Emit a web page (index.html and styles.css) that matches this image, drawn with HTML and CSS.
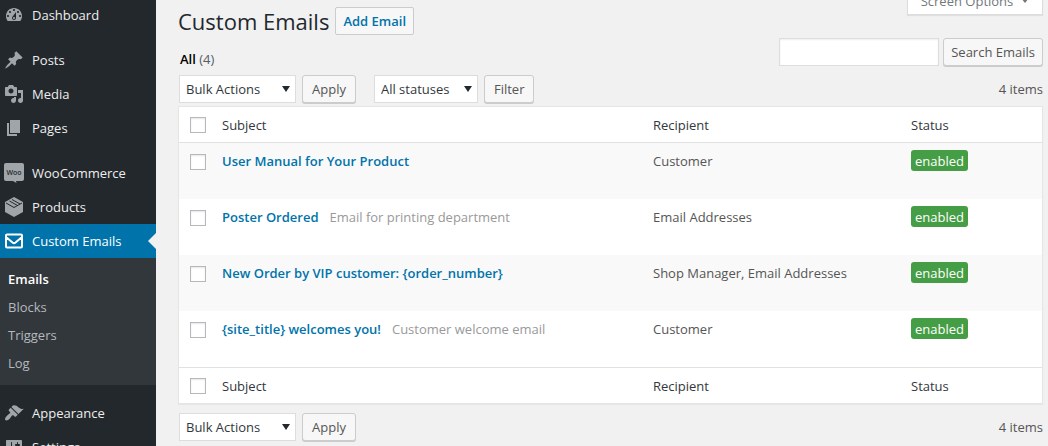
FILE: index.html
```html
<!DOCTYPE html>
<html lang="en">
<head>
<meta charset="utf-8">
<title>Custom Emails</title>
<link rel="stylesheet" href="styles.css">
</head>
<body>
<div class="layout">
  <nav class="sidebar" aria-label="Main menu">
    <ul class="menu">
      <li><a class="menu-link" href="#">
        <svg class="icon" viewBox="0 0 20 20" aria-hidden="true"><path fill-rule="evenodd" d="M3.76 16h12.48c1.1-1.37 1.76-3.11 1.76-5 0-4.42-3.58-8-8-8s-8 3.58-8 8c0 1.89.66 3.63 1.76 5zM10 4c.55 0 1 .45 1 1s-.45 1-1 1-1-.45-1-1 .45-1 1-1zM6 6c.55 0 1 .45 1 1s-.45 1-1 1-1-.45-1-1 .45-1 1-1zm8 0c.55 0 1 .45 1 1s-.45 1-1 1-1-.45-1-1 .45-1 1-1zm-5.37 5.55L12 7v6c0 1.1-.9 2-2 2s-2-.9-2-2c0-.57.24-1.08.63-1.45zM4 10c.55 0 1 .45 1 1s-.45 1-1 1-1-.45-1-1 .45-1 1-1zm12 0c.55 0 1 .45 1 1s-.45 1-1 1-1-.45-1-1 .45-1 1-1zm-5 3c0-.55-.45-1-1-1s-1 .45-1 1 .45 1 1 1 1-.45 1-1z"/></svg>
        Dashboard</a></li>
      <li class="group-start"><a class="menu-link" href="#">
        <svg class="icon" viewBox="0 0 20 20" aria-hidden="true"><path d="M10.44 3.02l1.82-1.82 6.36 6.35-1.83 1.82c-1.05-.68-2.48-.57-3.41.36l-.75.75c-.92.93-1.04 2.35-.35 3.41l-1.83 1.82-2.41-2.41-2.8 2.79c-.42.42-3.38 2.71-3.8 2.29s1.86-3.39 2.28-3.81l2.79-2.79L4.1 9.36l1.83-1.82c1.05.69 2.48.57 3.4-.36l.75-.75c.93-.92 1.05-2.35.36-3.41z"/></svg>
        Posts</a></li>
      <li><a class="menu-link" href="#">
        <svg class="icon" viewBox="0 0 20 20" aria-hidden="true"><path fill-rule="evenodd" d="M13 11V4c0-.55-.45-1-1-1h-1.67L9 1H5L3.67 3H2c-.55 0-1 .45-1 1v7c0 .55.45 1 1 1h10c.55 0 1-.45 1-1zM7 4.5c1.38 0 2.5 1.12 2.5 2.5S8.38 9.5 7 9.5 4.5 8.38 4.5 7 5.62 4.5 7 4.5zM14 6h5v10.5c0 1.38-1.12 2.5-2.5 2.5S14 17.88 14 16.5s1.12-2.5 2.5-2.5c.17 0 .34.02.5.05V9h-3V6zm-4 8.05V13h2v3.5c0 1.38-1.12 2.5-2.5 2.5S7 17.88 7 16.5 8.12 14 9.5 14c.17 0 .34.02.5.05z"/></svg>
        Media</a></li>
      <li><a class="menu-link" href="#">
        <svg class="icon" viewBox="0 0 20 20" aria-hidden="true"><path d="M6 15V2h10v13H6zm-1 1h8v2H3V5h2v11z"/></svg>
        Pages</a></li>
      <li class="group-start"><a class="menu-link" href="#">
        <svg class="icon" viewBox="0 0 20 20" aria-hidden="true"><path d="M2 0h16c1.1 0 2 .9 2 2v14c0 1.1-.9 2-2 2h-6l.5 2L9 18H2c-1.100 0-2-.9-2-2V2C0 .9.9 0 2 0z"/><text class="woo-text" x="10" y="12" text-anchor="middle">Woo</text></svg>
        WooCommerce</a></li>
      <li><a class="menu-link" href="#">
        <svg class="icon" viewBox="0 0 20 20" aria-hidden="true"><path d="M10 0l9 5v10l-9 5-9-5V5z"/><path class="carton-lines" d="M2 6l8 4.500L18 6M5.500 4l8 4.500M8 2.500l8 4.500"/></svg>
        Products</a></li>
      <li><a class="menu-link current" href="#" aria-current="page">
        <svg class="icon" viewBox="0 0 20 20" aria-hidden="true"><path class="envelope" d="M3 3.500h14a1 1 0 0 1 1 1v11a1 1 0 0 1-1 1H3a1 1 0 0 1-1-1v-11a1 1 0 0 1 1-1zM2 6l6.500 5.500q1.500 1.200 3 0L18 6"/></svg>
        Custom Emails</a>
        <ul class="submenu">
          <li><a class="submenu-link active" href="#">Emails</a></li>
          <li><a class="submenu-link" href="#">Blocks</a></li>
          <li><a class="submenu-link" href="#">Triggers</a></li>
          <li><a class="submenu-link" href="#">Log</a></li>
        </ul>
      </li>
      <li class="group-start"><a class="menu-link" href="#">
        <svg class="icon" viewBox="0 0 20 20" aria-hidden="true"><path d="M14.480 11.060L7.410 3.990l1.500-1.500c.5-.56 2.300-.47 3.510.32 1.210.8 1.430 1.280 2.910 2.100 1.180.64 2.450 1.260 4.450.85zm-.71.71L6.700 4.700 4.930 6.470c-.39.39-.39 1.020 0 1.410l1.060 1.060c.39.39.39 1.030 0 1.420-.6.6-1.430 1.110-2.210 1.690-.35.26-.7.53-1.010.84C1.430 14.230.4 16.080 1.400 17.070c.99 1 2.840-.03 4.180-1.360.31-.31.58-.66.85-1.020.57-.78 1.080-1.610 1.690-2.210.39-.39 1.020-.39 1.410 0l1.060 1.060c.39.39 1.020.39 1.410 0z"/></svg>
        Appearance</a></li>
      <li><a class="menu-link" href="#">
        <svg class="icon" viewBox="0 0 20 20" aria-hidden="true"><path fill-rule="evenodd" d="M18 16V4c0-.55-.45-1-1-1H3c-.55 0-1 .45-1 1v12c0 .55.45 1 1 1h14c.55 0 1-.45 1-1zM8 11h1c.55 0 1 .45 1 1s-.45 1-1 1H8v1.500c0 .28-.22.5-.5.5s-.5-.22-.5-.5V13H6c-.55 0-1-.45-1-1s.45-1 1-1h1V5.500c0-.28.22-.5.5-.5s.5.22.5.5V11zm5-2h-1c-.55 0-1-.45-1-1s.45-1 1-1h1V5.500c0-.28.22-.5.5-.5s.5.22.5.5V7h1c.55 0 1 .45 1 1s-.45 1-1 1h-1v5.500c0 .28-.22.5-.5.5s-.5-.22-.5-.5V9z"/></svg>
        Settings</a></li>
    </ul>
  </nav>

  <main class="content">
    <header class="page-head">
      <div class="title-row">
        <h1 class="title">Custom Emails</h1>
        <a class="add-link" href="#">Add Email</a>
      </div>
      <button class="screen-options" type="button">Screen Options <span class="caret"></span></button>
    </header>

    <div class="views-row">
      <a class="view-link" href="#"><b class="view-name">All</b> <span class="count">(4)</span></a>
      <form class="search">
        <input class="search-input" type="search" aria-label="Search Emails">
        <button class="button button-search" type="submit">Search Emails</button>
      </form>
    </div>

    <div class="tablenav">
      <div class="actions">
        <span class="select"><select class="select-box select-bulk" aria-label="Bulk action"><option>Bulk Actions</option></select></span>
        <button class="button" type="button">Apply</button>
      </div>
      <div class="actions">
        <span class="select"><select class="select-box select-status" aria-label="Filter by status"><option>All statuses</option></select></span>
        <button class="button" type="button">Filter</button>
      </div>
      <span class="item-count">4 items</span>
    </div>

    <table class="emails">
      <thead>
        <tr><td class="col-check"><input class="check" type="checkbox" aria-label="Select all"></td><th class="col-subject" scope="col">Subject</th><th class="col-recipient" scope="col">Recipient</th><th class="col-status" scope="col">Status</th></tr>
      </thead>
      <tbody>
        <tr><td class="col-check"><input class="check" type="checkbox" aria-label="Select User Manual for Your Product"></td><td><a class="subject" href="#">User Manual for Your Product</a></td><td>Customer</td><td><span class="badge">enabled</span></td></tr>
        <tr><td class="col-check"><input class="check" type="checkbox" aria-label="Select Poster Ordered"></td><td><a class="subject" href="#">Poster Ordered</a><span class="note">Email for printing department</span></td><td>Email Addresses</td><td><span class="badge">enabled</span></td></tr>
        <tr><td class="col-check"><input class="check" type="checkbox" aria-label="Select New Order by VIP customer"></td><td><a class="subject" href="#">New Order by VIP customer: {order_number}</a></td><td>Shop Manager, Email Addresses</td><td><span class="badge">enabled</span></td></tr>
        <tr><td class="col-check"><input class="check" type="checkbox" aria-label="Select {site_title} welcomes you!"></td><td><a class="subject" href="#">{site_title} welcomes you!</a><span class="note">Customer welcome email</span></td><td>Customer</td><td><span class="badge">enabled</span></td></tr>
      </tbody>
      <tfoot>
        <tr><td class="col-check"><input class="check" type="checkbox" aria-label="Select all"></td><th scope="col">Subject</th><th scope="col">Recipient</th><th scope="col">Status</th></tr>
      </tfoot>
    </table>

    <div class="tablenav tablenav-bottom">
      <div class="actions">
        <span class="select"><select class="select-box select-bulk" aria-label="Bulk action"><option>Bulk Actions</option></select></span>
        <button class="button" type="button">Apply</button>
      </div>
      <span class="item-count">4 items</span>
    </div>
  </main>
</div>
</body>
</html>
```
FILE: styles.css
```css
* { box-sizing: border-box; }
html { height: 100%; overflow: hidden; }
body {
  margin: 0;
  height: 100%;
  overflow: hidden;
  background: #f1f1f1;
  color: #555;
  font: 13px/20px "Open Sans", "Noto Sans", sans-serif;
}
ul { margin: 0; padding: 0; list-style: none; }
a { color: #0073aa; text-decoration: none; }
button, input, select { margin: 0; font: inherit; color: inherit; }

.layout { display: flex; align-items: stretch; min-height: 100%; }

/* Sidebar */
.sidebar { flex: none; width: 156px; background: #23282d; }
.menu { margin-top: -2px; }
.group-start { margin-top: 11px; }
.menu-link {
  position: relative;
  display: flex;
  align-items: center;
  gap: 8px;
  height: 34px;
  padding-left: 4px;
  color: #eee;
}
.icon { flex: none; width: 20px; height: 20px; fill: #a0a5aa; }
.woo-text { font: 600 7px "Open Sans", sans-serif; fill: #23282d; }
.carton-lines { fill: none; stroke: #23282d; stroke-width: 1; }
.envelope { fill: none; stroke: #fff; stroke-width: 2; }
.current { background: #0073aa; color: #fff; }
.current::after {
  content: "";
  position: absolute;
  right: 0;
  top: 9px;
  border: 8px solid transparent;
  border-left-width: 0;
  border-right-color: #f1f1f1;
}
.submenu { padding: 7px 0 8px; background: #32373c; }
.submenu-link { display: block; padding: 4px 8px; color: #b4b9be; }
.submenu-link.active { color: #fff; font-weight: 600; }

/* Page heading */
.content { flex: 1; min-width: 0; padding: 0 5px 0 22px; }
.page-head { display: flex; justify-content: space-between; align-items: flex-start; }
.title-row { display: flex; align-items: center; gap: 6px; padding-top: 6px; }
.title { margin: 0; color: #23282d; font-size: 22px; line-height: 30px; font-weight: 400; }
.add-link {
  padding: 3px 7px;
  border: 1px solid #ccc;
  border-radius: 2px;
  background: #f7f7f7;
  font-weight: 600;
}
.screen-options {
  display: flex;
  align-items: center;
  justify-content: center;
  gap: 8px;
  width: 136px;
  height: 28px;
  margin-top: -13px;
  border: 1px solid #ddd;
  border-top: 0;
  background: #fff;
  color: #72777c;
  box-shadow: 0 1px 1px #0001;
}
.caret { border: 4px solid transparent; border-top: 5px solid #72777c; border-bottom: 0; }

/* Views and search */
.views-row { display: flex; justify-content: space-between; align-items: flex-end; padding: 2px 0 9px; }
.view-link { padding-left: 2px; line-height: 14px; }
.view-name { color: #000; font-weight: 600; }
.count { color: #555d66; }
.search { display: flex; gap: 4px; }
.search-input {
  width: 160px;
  height: 28px;
  padding: 0 5px;
  border: 1px solid #ddd;
  background: #fff;
  box-shadow: inset 0 1px 2px #00000012;
  appearance: none;
}
.button {
  height: 28px;
  padding: 0 9px;
  border: 1px solid #ccc;
  border-radius: 3px;
  background: #f7f7f7;
  box-shadow: 0 1px 0 #ccc;
}
.button-search { padding: 0 7px; }

/* Bulk actions and filters */
.tablenav { display: flex; align-items: center; gap: 18px; padding: 0 0 3px 1px; }
.tablenav-bottom { padding: 9px 0 4px 1px; }
.actions { display: flex; gap: 6px; }
.select { display: grid; align-items: center; }
.select-box {
  grid-area: 1 / 1;
  height: 28px;
  padding: 0 6px;
  border: 1px solid #ddd;
  border-radius: 0;
  background: #fff;
  color: #32373c;
  appearance: none;
}
.select-bulk { width: 117px; }
.select-status { width: 104px; }
.select::after {
  content: "";
  grid-area: 1 / 1;
  justify-self: end;
  margin-right: 6px;
  border: 4px solid transparent;
  border-top: 6px solid #23282d;
  border-bottom: 0;
  pointer-events: none;
}
.item-count { margin-left: auto; }

/* Emails table */
.emails {
  width: 100%;
  border: 1px solid #e5e5e5;
  border-spacing: 0;
  background: #fff;
  box-shadow: 0 1px 1px #0000000a;
  table-layout: fixed;
}
.emails th, .emails td { padding: 8px 10px 7px; text-align: left; vertical-align: top; }
.emails th { color: #32373c; font-weight: 400; }
.emails thead th, .emails thead td { border-bottom: 1px solid #e1e1e1; }
.emails tfoot th, .emails tfoot td { border-top: 1px solid #e1e1e1; }
.emails tbody tr { height: 56px; }
.emails tbody tr:nth-child(odd) { background: #f9f9f9; }
.emails .col-check { width: 33px; padding: 10px 0 0 11px; }
.emails tbody .col-check { padding-top: 11px; }
.col-recipient { width: 258px; }
.col-status { width: 141px; }
.check {
  display: block;
  width: 16px;
  height: 16px;
  border: 1px solid #b4b9be;
  background: #fff;
  box-shadow: inset 0 1px 2px #0000001a;
  appearance: none;
}
.subject { font-weight: 600; }
.note { margin-left: 11px; color: #999; }
.badge {
  display: block;
  width: fit-content;
  margin-top: -1px;
  padding: 1px 4px 0;
  border-radius: 3px;
  background: #459e45;
  color: #fff;
}
```
